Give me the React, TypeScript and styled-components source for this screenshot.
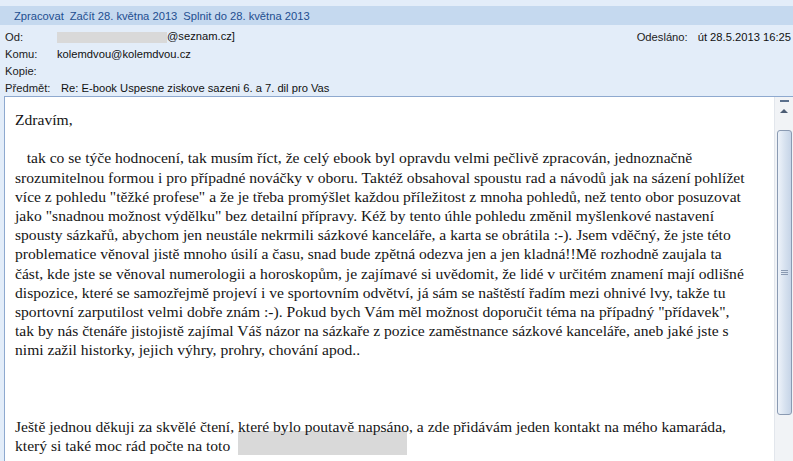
import React from 'react'
import styled, { createGlobalStyle } from 'styled-components'

const GlobalStyle = createGlobalStyle`
  html, body {
    margin: 0;
    padding: 0;
    background: #e3edf9;
  }
  body {
    width: 793px;
    height: 461px;
    overflow: hidden;
  }
`

const Window = styled.div`
  width: 793px;
  height: 461px;
  display: flex;
  flex-direction: column;
  background: #e3edf9;
  font-family: 'Liberation Sans', Arial, sans-serif;
  font-size: 11.2px;
  color: #1b1b1b;
  overflow: hidden;
`

const InfoBar = styled.div`
  margin-top: 6px;
  height: 19px;
  background: #c5d9ef;
  display: flex;
  align-items: center;
  gap: 6px;
  padding-left: 14px;
  color: #1e4e8f;
  white-space: nowrap;
`

const Fields = styled.div`
  display: flex;
  flex-direction: column;
  padding: 3px 0 0 5px;
  height: 68px;
`

const FieldRow = styled.div`
  display: flex;
  align-items: center;
  height: 17px;
  white-space: nowrap;
`

const Label = styled.span`
  min-width: 52px;
`

const Value = styled.span<{ shift?: number }>`
  margin-left: ${({ shift }) => (shift ? `${shift}px` : '0')};
  color: #111;
`

const Redacted = styled.span<{ w: number; h: number }>`
  display: inline-block;
  width: ${({ w }) => w}px;
  height: ${({ h }) => h}px;
  background: #d9d9d9;
  vertical-align: middle;
`

const Sent = styled.div`
  margin-left: auto;
  padding-right: 2px;
  display: flex;
  gap: 10px;
`

const Body = styled.div`
  flex: 1;
  margin-left: 4px;
  display: flex;
  background: #fff;
  border-top: 1px solid #8ea9cf;
  border-left: 1px solid #8ea9cf;
  overflow: hidden;
`

const Message = styled.div`
  flex: 1;
  position: relative;
  z-index: 0;
  padding: 13px 0 0 10px;
  font-family: 'Liberation Serif', 'Times New Roman', serif;
  font-size: 15.6px;
  line-height: 19.2px;
  color: #151515;
`

const Line = styled.div`
  white-space: pre;
  min-height: 19.2px;
`

// redacted contact, kept behind the line above it
const Hidden = styled.span`
  position: relative;
  z-index: -1;
  display: inline-block;
  margin-left: 8px;
  width: 169px;
  height: 24px;
  margin-top: -6px;
  vertical-align: -4px;
  background: #d9d9d9;
`

const Scrollbar = styled.div`
  width: 18px;
  display: flex;
  flex-direction: column;
  align-items: center;
  background: #f1f3f6;
  border-left: 1px solid #e2e6ec;
`

const Dash = styled.div`
  margin-top: 3px;
  width: 9px;
  height: 2px;
  background: #5a6f8c;
`

const Arrow = styled.div`
  margin-top: 7px;
  width: 0;
  height: 0;
  border-left: 4px solid transparent;
  border-right: 4px solid transparent;
  border-bottom: 4px solid #4d5d74;
`

const Thumb = styled.div`
  margin-top: 17px;
  width: 13px;
  height: 283px;
  border: 1px solid #8a9ab2;
  border-radius: 3px;
  background: linear-gradient(to right, #eef3fa, #d6e1ef 55%, #c6d4e7);
  display: flex;
  align-items: center;
  justify-content: center;
`

const Grip = styled.div`
  width: 7px;
  height: 5px;
  background: repeating-linear-gradient(
    to bottom,
    #8a9ab2 0,
    #8a9ab2 1px,
    transparent 1px,
    transparent 2px
  );
`

const lines = [
  'Zdravím,',
  '',
  '   tak co se týče hodnocení, tak musím říct, že celý ebook byl opravdu velmi pečlivě zpracován, jednoznačně',
  'srozumitelnou formou i pro případné nováčky v oboru. Taktéž obsahoval spoustu rad a návodů jak na sázení pohlížet',
  'více z pohledu "těžké profese" a že je třeba promýšlet každou příležitost z mnoha pohledů, než tento obor posuzovat',
  'jako "snadnou možnost výdělku" bez detailní přípravy. Kéž by tento úhle pohledu změnil myšlenkové nastavení',
  'spousty sázkařů, abychom jen neustále nekrmili sázkové kanceláře, a karta se obrátila :-). Jsem vděčný, že jste této',
  'problematice věnoval jistě mnoho úsilí a času, snad bude zpětná odezva jen a jen kladná!!Mě rozhodně zaujala ta',
  'část, kde jste se věnoval numerologii a horoskopům, je zajímavé si uvědomit, že lidé v určitém znamení mají odlišné',
  'dispozice, které se samozřejmě projeví i ve sportovním odvětví, já sám se naštěstí řadím mezi ohnivé lvy, takže tu',
  'sportovní zarputilost velmi dobře znám :-). Pokud bych Vám měl možnost doporučit téma na případný "přídavek",',
  'tak by nás čtenáře jistojistě zajímal Váš názor na sázkaře z pozice zaměstnance sázkové kanceláře, aneb jaké jste s',
  'nimi zažil historky, jejich výhry, prohry, chování apod..',
  '',
  '',
  '',
  'Ještě jednou děkuji za skvělé čtení, které bylo poutavě napsáno, a zde přidávám jeden kontakt na mého kamaráda,',
]

export default function App() {
  return (
    <>
      <GlobalStyle />
      <Window>
        <InfoBar>
          <span>Zpracovat</span>
          <span>Začít 28. května 2013</span>
          <span>Splnit do 28. května 2013</span>
        </InfoBar>
        <Fields>
          <FieldRow>
            <Label>Od:</Label>
            <Value>
              <Redacted w={110} h={11} />
              @seznam.cz]
            </Value>
            <Sent>
              <span>Odesláno:</span>
              <Value>út 28.5.2013 16:25</Value>
            </Sent>
          </FieldRow>
          <FieldRow>
            <Label>Komu:</Label>
            <Value>kolemdvou@kolemdvou.cz</Value>
          </FieldRow>
          <FieldRow>
            <Label>Kopie:</Label>
          </FieldRow>
          <FieldRow>
            <Label>Předmět:</Label>
            <Value shift={4}>Re: E-book Uspesne ziskove sazeni 6. a 7. dil pro Vas</Value>
          </FieldRow>
        </Fields>
        <Body>
          <Message>
            {lines.map((text, i) => (
              <Line key={i}>{text}</Line>
            ))}
            <Line>
              který si také moc rád počte na toto<Hidden />
            </Line>
          </Message>
          <Scrollbar>
            <Dash />
            <Arrow />
            <Thumb>
              <Grip />
            </Thumb>
          </Scrollbar>
        </Body>
      </Window>
    </>
  )
}
